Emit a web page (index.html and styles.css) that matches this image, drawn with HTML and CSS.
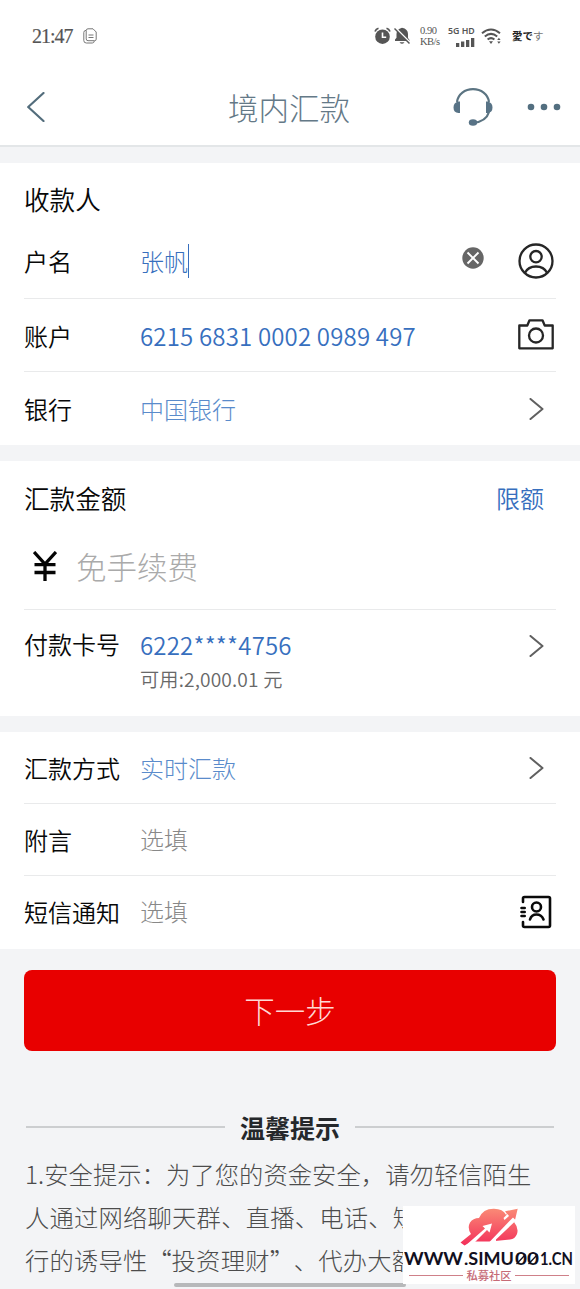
FILE: index.html
```html
<!DOCTYPE html>
<html lang="zh-CN">
<head>
<meta charset="utf-8">
<title>境内汇款</title>
<link rel="stylesheet" href="styles.css">
</head>
<body>
<div class="status">
  <span class="clock">21:47</span>
  <svg class="copy" width="14" height="16" viewBox="0 0 14 16" fill="none" stroke="#777" stroke-width="1"><path d="M5 .8h5l3.200 3.200v7.200q0 1.500-1.500 1.500H5q-1.800 0-1.800-1.800V2.600Q3.200.8 5 .8z"/><path d="M3 2.300Q.8 2.500.8 4.500v8q0 2.500 2.500 2.500h6q1.800 0 2-2M5.500 7h5M5.500 9.500h5"/></svg>
  <svg class="alarm" width="17" height="18" viewBox="0 0 17 18"><circle cx="8.500" cy="9.700" r="7.300" fill="#555"/><path d="M1 4.500Q2 2 4.500 1.300M12.500 1.300Q15 2 16 4.500" fill="none" stroke="#555" stroke-width="1.700"/><path d="M8.500 5.500v4.700h3.700" fill="none" stroke="#fff" stroke-width="1.600"/></svg>
  <svg class="mute" width="17" height="18" viewBox="0 0 17 18"><path d="M1 14V12.500l1.500-1.800V7Q2.500 2.300 8 .8 14 2 14 7v4l1.500 2v1z" fill="#555"/><path d="M5.500 15.200h5Q8 18.500 5.500 15.200z" fill="#555"/><path d="M.8 .5l15 15" stroke="#fff" stroke-width="2"/><path d="M.5 1.500l15 15" stroke="#555" stroke-width="1.500"/></svg>
  <span class="speed">0.90<br>KB/s</span>
  <span class="signal"><b>5G HD</b><svg width="20" height="9" viewBox="0 0 20 9" fill="#555"><path d="M1 5h3.300v4H1zM6 3.500h3.300V9H6zM11 2h3.300v7H11zM16 0h3.300v9H16z"/></svg></span>
  <svg class="wifi" width="21" height="17" viewBox="0 0 21 17" fill="none" stroke="#555"><path d="M1 5.200Q10 -2.200 19 5.200" stroke-width="2"/><path d="M3.800 8.500Q10 3.300 16.200 8.500" stroke-width="2"/><path d="M6.600 11.500Q10 8.800 13.400 11.500" stroke-width="2"/><path d="M8 13.300h4L10 16z" fill="#555" stroke="none"/><path d="M16.200 12l1.700-2.200 1.700 2.200zM16.200 13.500l1.700 2.200 1.700-2.200z" fill="#555" stroke="none"/></svg>
  <span class="carrier">愛で<i>す</i></span>
</div>
<header class="nav">
  <svg class="back" width="18" height="30" viewBox="0 0 18 30" fill="none" stroke="#536d7c" stroke-width="2.200" stroke-linecap="round" stroke-linejoin="round"><path d="M16.500 1L1.200 15l15.300 14"/></svg>
  <h1>境内汇款</h1>
  <svg class="headset" width="40" height="38" viewBox="0 0 40 38"><path d="M4 14C5 6 12 1.100 20 1.100S35 6 36 14M36 24C34 31 29 34 20 35" fill="none" stroke="#5b7482" stroke-width="2.200"/><path d="M7 13.500H5.500Q.5 14.500.5 19.500t5 5.500H7zM33 13.500h1.500q5 1 5 6t-5 5.500H33z" fill="#587386"/><ellipse cx="20" cy="34.500" rx="4.200" ry="3.300" fill="#587386"/></svg>
  <svg class="dots" width="34" height="8" viewBox="0 0 34 8" fill="#536f80"><circle cx="4" cy="4" r="3.300"/><circle cx="17" cy="4" r="3.300"/><circle cx="30" cy="4" r="3.300"/></svg>
</header>

<section class="card payee">
  <h2>收款人</h2>
  <div class="row name"><label>户名</label><span class="value light caret">张帆</span>
    <svg class="clear" width="22" height="22" viewBox="0 0 22 22"><circle cx="11" cy="11" r="10.700" fill="#666"/><path d="M5.500 5.500l11 11M16.500 5.500l-11 11" stroke="#fff" stroke-width="1.900"/></svg>
    <svg class="person" width="36" height="36" viewBox="0 0 36 36" fill="none" stroke="#262626" stroke-width="2.300"><circle cx="18" cy="18" r="16.500"/><circle cx="18" cy="13.700" r="5.700"/><path d="M7 29.800Q10 23.500 18 23.500t11 6.300"/></svg></div>
  <div class="row account"><label>账户</label><span class="value number">6215 6831 0002 0989 497</span>
    <svg width="36" height="31" viewBox="0 0 36 31" fill="none" stroke="#262626" stroke-width="2.300" stroke-linejoin="round"><path d="M1.300 6.500h8l2.200-5.200h13l2.200 5.200h8v22.800H1.300z"/><circle cx="18" cy="16.500" r="7"/></svg></div>
  <div class="row bank"><label>银行</label><span class="value thin">中国银行</span><svg class="go" width="15" height="22" viewBox="0 0 15 22"><path d="M1.500 1l12 10-12 10"/></svg></div>
</section>

<section class="card amount">
  <div class="head"><h2>汇款金额</h2><a>限额</a></div>
  <div class="money"><svg width="24" height="30" viewBox="0 0 24 30" fill="none" stroke="#050505" stroke-width="3.300"><path d="M1 1l11 12L23 1M12 12v18M1.500 13.700h21M1.500 21.500h21"/></svg><span>免手续费</span></div>
  <div class="row paycard"><label>付款卡号</label><div class="value number">6222****4756<small>可用:2,000.01 元</small></div><svg class="go" width="15" height="22" viewBox="0 0 15 22"><path d="M1.500 1l12 10-12 10"/></svg></div>
</section>

<section class="card method">
  <div class="row"><label>汇款方式</label><span class="value thin">实时汇款</span><svg class="go" width="15" height="22" viewBox="0 0 15 22"><path d="M1.500 1l12 10-12 10"/></svg></div>
  <div class="row"><label>附言</label><span class="value hint">选填</span></div>
  <div class="row sms"><label>短信通知</label><span class="value hint">选填</span>
    <svg class="book" width="32" height="34" viewBox="0 0 32 34" fill="none" stroke="#0a0a0a" stroke-width="2.600" stroke-linecap="round"><path d="M3 7V3.500Q3 2 4.500 2h24Q30 2 30 3.500v27q0 1.500-1.500 1.500h-24Q3 32 3 30.500V27M1.500 13h3.200M1.500 17h3.200M1.500 21h3.200"/><circle cx="16.500" cy="12" r="4.500"/><path d="M10 24.500Q11.500 19.500 16.500 19.500t7 5"/></svg></div>
</section>

<button class="next">下一步</button>
<div class="tips-title"><hr><h3>温馨提示</h3><hr></div>
<p class="tips">1.安全提示：为了您的资金安全，请勿轻信陌生<br><span>人通过网络聊天群、直播、电话、短信等形式进</span><br><span>行的诱导性<q>“</q>投资理财<q>”</q>、代办大额</span></p>
<div class="home"></div>
<aside class="mark">
  <svg width="58" height="38" viewBox="0 0 58 38"><defs><linearGradient id="g" x1="0" y1="0" x2="0" y2="1"><stop offset="0" stop-color="#fa8a76"/><stop offset="1" stop-color="#f32f5a"/></linearGradient></defs>
  <path d="M.5 34.500L11 26Q7 20 10 14.500 13 10 19 10 23 .5 34 .7q9 0 12 6l1-.8-2-2.600L57.700.7 55 12l-1 2q5 6 3 12-2 5-7 5.500L30 33.500H12L4.500 37.500z" fill="url(#g)"/>
  <path d="M5 38L25 20.500l-2.500-2.500 9.500-2.500-2.500 9-2.500-2.500L15 34l1 4zM29 34.500L49.500 13l3.500-3.500 3 3L36 31.500v3zM43.500 10l4-4 1.500 2-4.500 4z" fill="#fff"/></svg>
  <svg class="site" width="172" height="18" viewBox="0 0 172 18"><text x="1" y="15" textLength="59" lengthAdjust="spacingAndGlyphs">WWW</text><text x="61" y="15" textLength="50" lengthAdjust="spacingAndGlyphs">.SIMU</text><text x="112" y="15" textLength="24" lengthAdjust="spacingAndGlyphs">00</text><text x="137" y="15" textLength="33" lengthAdjust="spacingAndGlyphs">1.CN</text><path d="M113.500 14l9-9.500M125.500 14l9-9.500" stroke="#12101e" stroke-width="1.300"/></svg>
  <div class="community"><i></i><span>私募社区</span><i></i></div>
</aside>
</body>
</html>
```
FILE: styles.css
```css
* { box-sizing: border-box; }
body {
  margin: 0;
  width: 580px;
  height: 1289px;
  overflow: hidden;
  position: relative;
  background: #f3f4f6;
  font-family: "Noto Sans CJK SC", sans-serif;
  font-weight: 350;
  color: #080808;
}
svg { display: block; flex: none; }
h1, h2, h3, p { margin: 0; font-weight: 350; }

.status { height: 72px; background: #fff; display: flex; align-items: center; padding: 0 0 0 32px; color: #555; }
.clock { width: 51px; font: 20px/24px "Liberation Serif", serif; letter-spacing: -1px; -webkit-text-stroke: .2px #555; }
.alarm { margin-left: 277px; }
.mute { margin-left: 3px; }
.speed { width: 24px; margin-left: 9px; font: 10.500px/11px "Liberation Serif", serif; letter-spacing: -.5px; white-space: nowrap; }
.signal { width: 29px; margin-left: 4px; display: flex; flex-direction: column; align-items: flex-end; gap: 2px; white-space: nowrap; }
.signal b { font: 600 8.800px/10px "Noto Sans", sans-serif; width: 29px; }
.signal svg { margin-right: 2px; }
.wifi { margin-left: 4px; }
.carrier { margin-left: 10px; font: 700 10.500px/16px "Noto Sans CJK JP", sans-serif; color: #222; white-space: nowrap; }
.carrier i { font-style: normal; font-weight: 400; color: #777; }

.nav { height: 75px; background: #fff; border-bottom: 2px solid #e3e6e8; display: flex; align-items: center; padding: 0 19px 3px 27px; }
.nav h1 { margin: 0 auto 0 183px; font-size: 30.500px; line-height: 40px; font-weight: 300; color: #647987; }
.dots { margin-left: 34px; }

.card { background: #fff; padding: 0 24px; }
.payee { margin-top: 16px; height: 282px; }
.amount { margin-top: 16px; height: 255px; }
.method { margin-top: 16px; height: 217px; }
h2 { font-size: 25.600px; line-height: 36px; }
.payee h2 { padding-top: 18px; height: 61px; }
.row { height: 73px; display: flex; align-items: center; border-bottom: 1px solid #e9eaeb; font-size: 24px; line-height: 34px; }
.row:last-child { border-bottom: 0; }
label { width: 116px; flex: none; }
.value { flex: 1; color: #376fbe; }
.number { letter-spacing: .18px; }
.account label, .account .number { padding-top: 2px; }
.light { font-weight: 300; }
.thin { font-weight: 300; color: #5a8bcb; }
.hint { font-weight: 300; color: #888; }
.name { height: 75px; padding-bottom: 1px; }
.name .light { flex: none; }
.caret { border-right: 1.500px solid #376fbe; }
.clear { margin: 0 34px 5px auto; }
.person, .account svg { margin-right: 2px; }
.account svg { margin-bottom: 2px; }
.go { margin-right: 12px; fill: none; stroke: #606060; stroke-width: 2; stroke-linecap: round; stroke-linejoin: round; }
.head { display: flex; justify-content: space-between; align-items: center; height: 74px; padding-right: 12px; }
.head a { font-size: 24px; line-height: 34px; color: #376fbe; }
.money { height: 75px; display: flex; align-items: center; padding: 0 0 12px 9px; gap: 19px; border-bottom: 1px solid #e9eaeb; font-size: 30.500px; line-height: 42px; }
.money span { font-weight: 300; color: #aaa; }
.paycard { height: 106px; align-items: flex-start; padding-top: 17px; }
.paycard .value { padding-top: 1px; }
.paycard .go { margin-top: 8px; }
small { display: block; font-size: 19.200px; line-height: 34px; font-weight: 350; color: #686868; letter-spacing: .15px; }
.method .row { height: 72px; }
.book { margin-right: 4px; }
.method .hint { margin-top: -2px; }

.next { display: block; width: 532px; height: 81px; margin: 21px 24px 0; padding: 0 0 2px; border: 0; border-radius: 8px; background: #e80000; color: #ffd8d4; font: 300 30.500px/44px "Noto Sans CJK SC", sans-serif; }
.tips-title { display: flex; align-items: center; gap: 15px; margin: 58px 26px 0; height: 36px; }
.tips-title hr { flex: 1; height: 2px; margin: 0; border: 0; background: #ccced0; }
.tips-title h3 { font-size: 25px; line-height: 36px; font-weight: 700; color: #25282b; }
.tips { margin: 7px 0 0 25px; font-size: 24.300px; line-height: 43px; font-weight: 300; color: #4c4c4c; white-space: nowrap; letter-spacing: .06px; }
.tips span { letter-spacing: .22px; }
.tips q { quotes: none; display: inline-block; width: 24px; text-align: center; }
.home { position: absolute; left: 174px; top: 1283px; width: 232px; height: 4px; border-radius: 2px; background: #b7b8ba; }
.mark { position: absolute; left: 403px; top: 1206px; width: 172px; height: 78px; background: #fff; display: flex; flex-direction: column; align-items: center; }
.mark > svg:first-child { margin-top: 2px; }
.site { margin-top: 4px; }
.site text { font: 700 16.500px Lato, sans-serif; fill: #12101e; }
.community { display: flex; align-items: center; gap: 3px; margin-top: -1px; font-size: 11.300px; line-height: 16px; font-weight: 500; color: #c66b77; }
.community i { width: 54px; height: 1px; background: #cf8089; }
```
